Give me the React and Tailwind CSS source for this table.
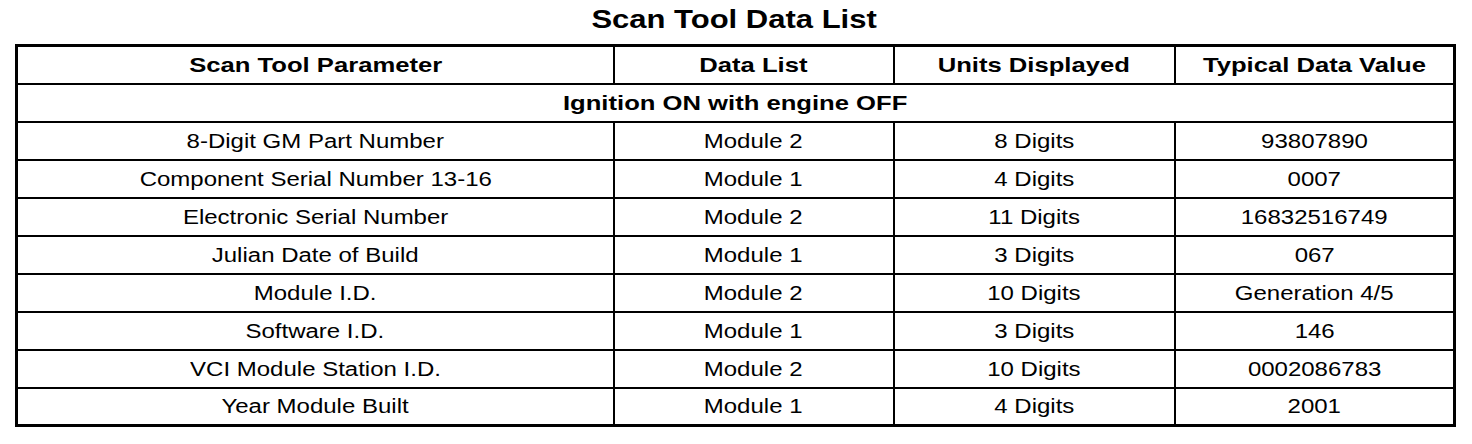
import React from 'react';

const rows = [
  ['8-Digit GM Part Number', 'Module 2', '8 Digits', '93807890'],
  ['Component Serial Number 13-16', 'Module 1', '4 Digits', '0007'],
  ['Electronic Serial Number', 'Module 2', '11 Digits', '16832516749'],
  ['Julian Date of Build', 'Module 1', '3 Digits', '067'],
  ['Module I.D.', 'Module 2', '10 Digits', 'Generation 4/5'],
  ['Software I.D.', 'Module 1', '3 Digits', '146'],
  ['VCI Module Station I.D.', 'Module 2', '10 Digits', '0002086783'],
  ['Year Module Built', 'Module 1', '4 Digits', '2001'],
];

const headers = ['Scan Tool Parameter', 'Data List', 'Units Displayed', 'Typical Data Value'];

export default function App() {
  return (
    <div className="w-[1472px] h-[444px] bg-white pl-[15px] font-['Liberation_Sans',Arial,sans-serif] text-black">
      <div className="w-[1438px]">
        <h1 className="text-center text-[25px] font-bold leading-[38px] mb-[6px]">
          <span className="inline-block scale-x-[1.24]">Scan Tool Data List</span>
        </h1>
        <table className="w-full table-fixed border-collapse border-[3px] border-black">
          <colgroup>
            <col className="w-[597px]" />
            <col className="w-[280px]" />
            <col className="w-[281px]" />
            <col className="w-[280px]" />
          </colgroup>
          <thead>
            <tr className="h-[38px]">
              {headers.map((h) => (
                <th key={h} className="border-2 border-black p-0 text-center text-[21px] font-bold leading-none">
                  <span className="inline-block scale-x-[1.22] whitespace-nowrap">{h}</span>
                </th>
              ))}
            </tr>
          </thead>
          <tbody>
            <tr className="h-[38px]">
              <td colSpan={4} className="border-2 border-black p-0 text-center text-[21px] font-bold leading-none">
                <span className="inline-block scale-x-[1.22]">Ignition ON with engine OFF</span>
              </td>
            </tr>
            {rows.map((r) => (
              <tr key={r[0]} className="h-[38px]">
                {r.map((c, i) => (
                  <td key={i} className="border-2 border-black p-0 text-center text-[20px] leading-none">
                    <span className="inline-block scale-x-[1.2] whitespace-nowrap">{c}</span>
                  </td>
                ))}
              </tr>
            ))}
          </tbody>
        </table>
      </div>
    </div>
  );
}
